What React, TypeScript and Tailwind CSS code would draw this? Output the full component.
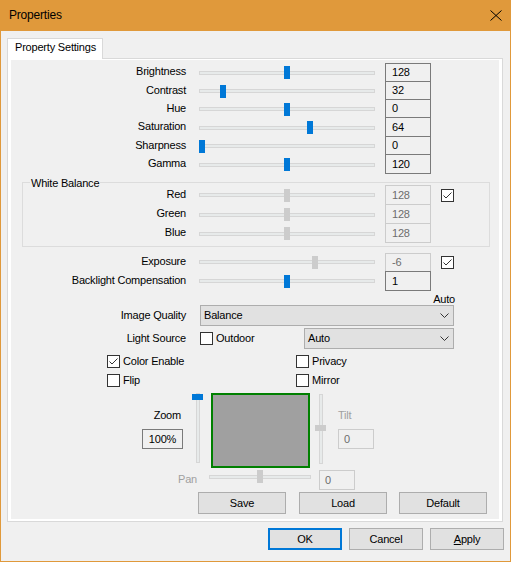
import React from "react";

const Check = ({ checked }: { checked?: boolean }) => (
  <div className="w-[13px] h-[13px] border border-[#333333] bg-white flex items-center justify-center shrink-0">
    {checked && (
      <svg width="11" height="11" viewBox="0 0 11 11">
        <polyline points="1.5,5.5 4,8 9.5,2.5" fill="none" stroke="#333333" strokeWidth="1" />
      </svg>
    )}
  </div>
);

const Slider = ({ cls, pos, off }: { cls: string; pos: number; off?: boolean }) => (
  <div className={`relative flex items-center h-[13px] ${cls}`}>
    <div className="w-full h-[4px] bg-[#e7eaea] border border-[#d6d6d6]" />
    <div
      className={`absolute top-0 w-[6px] h-[13px] ${off ? "bg-[#cccccc]" : "bg-[#0078d7]"}`}
      style={{ left: pos }}
    />
  </div>
);

const VSlider = ({ cls, pos, off }: { cls: string; pos: number; off?: boolean }) => (
  <div className={`relative flex justify-center w-[11px] h-[70px] ${cls}`}>
    <div className="h-full w-[4px] bg-[#e7eaea] border border-[#d6d6d6]" />
    <div
      className={`absolute left-0 w-[11px] h-[6px] ${off ? "bg-[#cccccc]" : "bg-[#0078d7]"}`}
      style={{ top: pos }}
    />
  </div>
);

type RowP = {
  label: string;
  lw: string;
  h: string;
  pos: number;
  val: string;
  box: string;
  off?: boolean;
  check?: boolean;
};

const Row = ({ label, lw, h, pos, val, box, off, check }: RowP) => (
  <div className={`flex items-center ${h}`}>
    <div className={`${lw} text-right pb-[2px]`}>{label}</div>
    <Slider cls="ml-[13px] w-[176px]" pos={pos} off={off} />
    <div className={`ml-[10px] w-[46px] self-stretch flex items-center pl-[6px] ${box}`}>{val}</div>
    {check && (
      <div className="ml-[10px]">
        <Check checked />
      </div>
    )}
  </div>
);

const Chevron = () => (
  <svg width="9" height="5" viewBox="0 0 9 5">
    <polyline points="0.5,0.5 4.5,4.5 8.5,0.5" fill="none" stroke="#333333" strokeWidth="1" />
  </svg>
);

const Combo = ({ cls, text }: { cls: string; text: string }) => (
  <div className={`h-[21px] bg-[#e1e1e1] border border-[#adadad] flex items-center justify-between pl-[3px] pr-[4px] ${cls}`}>
    <span>{text}</span>
    <Chevron />
  </div>
);

const Btn = ({ cls, children }: { cls: string; children: React.ReactNode }) => (
  <div className={`h-[22px] bg-[#e1e1e1] flex items-center justify-center ${cls}`}>{children}</div>
);

const DARK = "border-[#7a7a7a]";
const LIGHT = "border-[#cccccc] text-[#6d6d6d]";

export default function App() {
  return (
    <div className="w-[511px] h-[562px] bg-[#f0f0f0] border-x border-b border-[#e0993b] flex flex-col font-['Liberation_Sans',Arial,sans-serif] text-[11px] leading-[13px] tracking-[-0.2px] text-black overflow-hidden">
      <div className="h-[31px] shrink-0 bg-[#e0993b] flex items-center justify-between pl-[8px] pr-[8px]">
        <span className="text-[12px]">Properties</span>
        <svg width="12" height="11" viewBox="0 0 12 11">
          <path d="M0.5 0.5L11.5 10.5M11.5 0.5L0.5 10.5" stroke="#000000" strokeWidth="1" fill="none" />
        </svg>
      </div>

      <div className="mt-[7px] ml-[6px] flex">
        <div className="relative z-10 h-[21px] w-[96px] border-x border-t border-[#d9d9d9] bg-white pl-[7px] pt-[2px] -mb-[1px]">
          Property Settings
        </div>
      </div>

      <div className="ml-[6px] w-[496px] h-[464px] shrink-0 border border-[#d9d9d9] bg-white pt-[1px] px-[3px] pb-[2px]">
        <div className="w-full h-full bg-[#f0f0f0] flex flex-col">
          <div className="mt-[3px] flex flex-col">
            <Row label="Brightness" lw="w-[175px]" h="h-[19px]" pos={85} val="128" box={`border ${DARK}`} />
            <Row label="Contrast" lw="w-[175px]" h="h-[18px]" pos={21} val="32" box={`border-x border-b ${DARK}`} />
            <Row label="Hue" lw="w-[175px]" h="h-[18px]" pos={85} val="0" box={`border-x border-b ${DARK}`} />
            <Row label="Saturation" lw="w-[175px]" h="h-[19px]" pos={108} val="64" box={`border-x border-b ${DARK}`} />
            <Row label="Sharpness" lw="w-[175px]" h="h-[18px]" pos={0} val="0" box={`border-x border-b ${DARK}`} />
            <Row label="Gamma" lw="w-[175px]" h="h-[19px]" pos={85} val="120" box={`border-x border-b ${DARK}`} />
          </div>

          <div className="relative mt-[8px] ml-[11px] w-[468px] h-[65px] shrink-0 border border-[#dcdcdc] pt-[2px] flex flex-col">
            <span className="absolute -top-[6px] left-[7px] px-[1px] bg-[#f0f0f0]">White Balance</span>
            <Row label="Red" lw="w-[163px]" h="h-[20px]" pos={85} off val="128" box={`border ${LIGHT}`} check />
            <Row label="Green" lw="w-[163px]" h="h-[19px]" pos={85} off val="128" box={`border-x border-b ${LIGHT}`} />
            <Row label="Blue" lw="w-[163px]" h="h-[19px]" pos={85} off val="128" box={`border-x border-b ${LIGHT}`} />
          </div>

          <div className="mt-[6px] flex flex-col">
            <Row label="Exposure" lw="w-[175px]" h="h-[18px]" pos={113} off val="-6" box={`border-x border-t ${LIGHT}`} check />
            <Row label="Backlight Compensation" lw="w-[175px]" h="h-[20px]" pos={85} val="1" box={`border ${DARK}`} />
          </div>

          <div className="mt-[2px] h-[12px] leading-[12px] w-[444px] text-right">Auto</div>

          <div className="flex items-center h-[21px]">
            <div className="w-[175px] text-right pb-[1px]">Image Quality</div>
            <Combo cls="ml-[14px] w-[254px]" text="Balance" />
          </div>

          <div className="mt-[2px] flex items-center h-[21px]">
            <div className="w-[175px] text-right pb-[1px]">Light Source</div>
            <div className="ml-[14px] w-[254px] flex items-center">
              <Check />
              <span className="ml-[3px]">Outdoor</span>
              <Combo cls="ml-auto w-[150px]" text="Auto" />
            </div>
          </div>

          <div className="mt-[6px] flex items-center h-[13px]">
            <div className="ml-[96px] w-[189px] flex items-center">
              <Check checked />
              <span className="ml-[3px]">Color Enable</span>
            </div>
            <Check />
            <span className="ml-[3px]">Privacy</span>
          </div>
          <div className="mt-[6px] flex items-center h-[13px]">
            <div className="ml-[96px] w-[189px] flex items-center">
              <Check />
              <span className="ml-[3px]">Flip</span>
            </div>
            <Check />
            <span className="ml-[3px]">Mirror</span>
          </div>

          <div className="mt-[6px] flex items-start h-[75px]">
            <div className="ml-[131px] w-[41px] flex flex-col">
              <div className="mt-[16px] h-[13px] text-right pr-[2px]">Zoom</div>
              <div className="mt-[7px] h-[20px] border border-[#7a7a7a] flex items-center justify-center">100%</div>
            </div>
            <VSlider cls="ml-[9px]" pos={1} />
            <div className="ml-[8px] w-[99px] h-[75px] border-2 border-[#008000] bg-[#a0a0a0]" />
            <VSlider cls="ml-[5px] mt-[1px]" pos={31} off />
            <div className="ml-[12px] w-[36px] flex flex-col">
              <div className="mt-[16px] h-[13px] text-[#a0a0a0]">Tilt</div>
              <div className="mt-[7px] h-[20px] border border-[#cccccc] text-[#6d6d6d] flex items-center pl-[5px]">0</div>
            </div>
          </div>

          <div className="mt-[2px] flex items-start h-[20px]">
            <div className="ml-[126px] w-[60px] mt-[3px] text-right text-[#a0a0a0]">Pan</div>
            <Slider cls="ml-[12px] w-[102px]" pos={48} off />
            <div className="ml-[8px] w-[36px] h-[20px] border border-[#cccccc] text-[#6d6d6d] flex items-center pl-[5px]">0</div>
          </div>

          <div className="mt-[2px] flex">
            <Btn cls="ml-[187px] w-[88px] border border-[#adadad]">Save</Btn>
            <Btn cls="ml-[13px] w-[88px] border border-[#adadad]">Load</Btn>
            <Btn cls="ml-[12px] w-[88px] border border-[#adadad]">Default</Btn>
          </div>
        </div>
      </div>

      <div className="mt-[6px] flex">
        <Btn cls="ml-[267px] w-[74px] border-2 border-[#0078d7]">OK</Btn>
        <Btn cls="ml-[7px] w-[74px] border border-[#adadad]">Cancel</Btn>
        <Btn cls="ml-[7px] w-[74px] border border-[#adadad]">
          <span>
            <span className="underline">A</span>pply
          </span>
        </Btn>
      </div>
    </div>
  );
}
